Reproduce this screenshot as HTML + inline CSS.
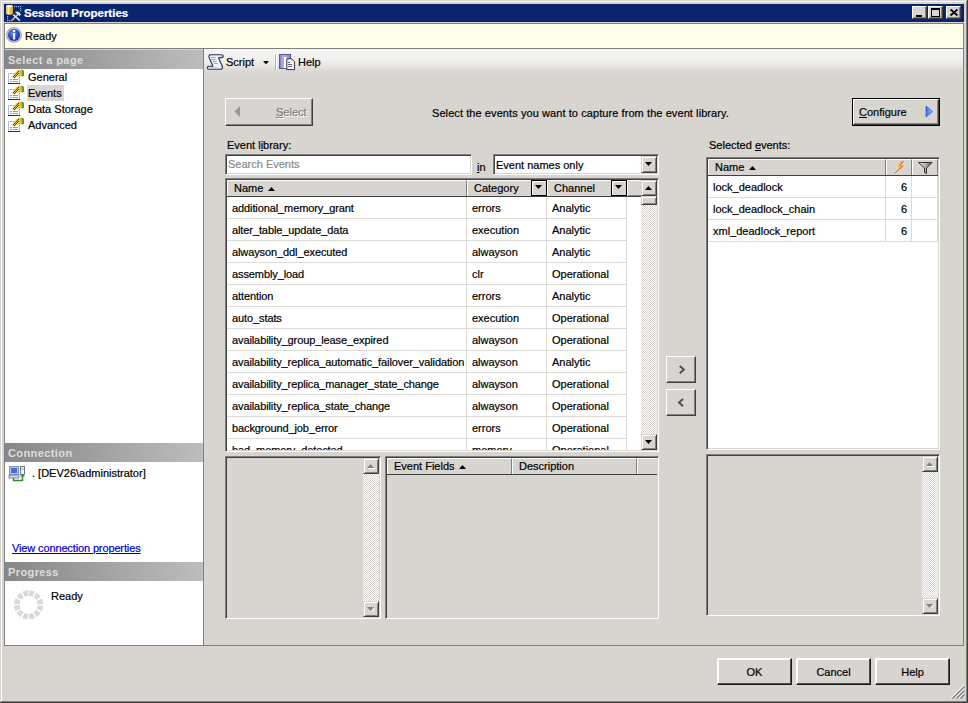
<!DOCTYPE html><html><head><meta charset="utf-8"><style>
*{box-sizing:border-box;margin:0;padding:0}
html,body{width:968px;height:703px;overflow:hidden}
body{position:relative;background:#D8D5D0;font-family:"Liberation Sans",sans-serif;font-size:11px;color:#000}
.a{position:absolute}
.t{position:absolute;line-height:13px;white-space:nowrap;-webkit-text-stroke:0.2px currentColor}
.sunken{position:absolute;border:1px solid;border-color:#808080 #fff #fff #808080;box-shadow:inset 1px 1px #404040,inset -1px -1px #D8D5D0}
.hdr{position:absolute;background:linear-gradient(to right,#878787,#bdbdbd);color:#dedede;font-weight:bold;font-size:11px;line-height:13px;letter-spacing:0.4px}
.btn{position:absolute;border:1px solid;border-color:#fff #404040 #404040 #fff;box-shadow:inset -1px -1px #808080;background:#D8D5D0}
.sb{position:absolute;border:1px solid;border-color:#D8D5D0 #404040 #404040 #D8D5D0;box-shadow:inset 1px 1px #fff,inset -1px -1px #808080;background:#D8D5D0}
.db{position:absolute;border:2px solid;border-color:#fff #1a1a1a #1a1a1a #fff;background:#D8D5D0}
.db:after{content:'';position:absolute;right:-1px;bottom:-1px;left:-1px;top:-1px;border-right:1px solid #505050;border-bottom:1px solid #505050}
.hc{position:absolute;height:16px;border-top:1px solid #fff;border-left:1px solid #fff;border-right:1px solid #808080;background:#D8D5D0}
.check{background-color:#fff;background-image:linear-gradient(45deg,#D8D5D0 25%,transparent 25%,transparent 75%,#D8D5D0 75%),linear-gradient(45deg,#D8D5D0 25%,transparent 25%,transparent 75%,#D8D5D0 75%);background-size:2px 2px;background-position:0 0,1px 1px}
.gl{position:absolute;background:#DCDAD5}
svg{position:absolute;overflow:visible}
</style></head><body>
<div class="a" style="left:1px;top:1px;width:1px;height:700px;background:#fff"></div>
<div class="a" style="left:1px;top:1px;width:965px;height:1px;background:#fff"></div>
<div class="a" style="left:966px;top:1px;width:1px;height:701px;background:#808080"></div>
<div class="a" style="left:1px;top:701px;width:966px;height:1px;background:#808080"></div>
<div class="a" style="left:967px;top:0;width:1px;height:703px;background:#404040"></div>
<div class="a" style="left:0;top:702px;width:968px;height:1px;background:#404040"></div>
<div class="a" style="left:4px;top:4px;width:960px;height:18px;background:#0A2570"></div>
<svg style="left:0;top:0" width="24" height="24" viewBox="0 0 24 24">
<defs><linearGradient id="cyl" x1="0" x2="1"><stop offset="0" stop-color="#f0b860"/><stop offset="0.35" stop-color="#fde9a0"/><stop offset="0.75" stop-color="#e8b830"/><stop offset="1" stop-color="#c89020"/></linearGradient></defs>
<path d="M6 6.5 Q6 5 9.5 5 Q13 5 13 6.5 V13.3 Q13 14.8 9.5 14.8 Q6 14.8 6 13.3 Z" fill="url(#cyl)"/>
<ellipse cx="9.5" cy="6.2" rx="3.2" ry="1.1" fill="#fff4c8"/>
<g fill="#9dbde6"><rect x="14" y="6" width="1.2" height="1.2"/><rect x="16" y="6" width="1.2" height="1.2"/><rect x="18" y="6" width="1.2" height="1.2"/><rect x="20" y="6" width="1.2" height="1.2"/><rect x="20" y="8" width="1.2" height="1.2"/><rect x="20" y="10" width="1.2" height="1.2"/>
<rect x="7" y="16" width="1.2" height="1.2"/><rect x="7" y="18" width="1.2" height="1.2"/><rect x="7" y="20" width="1.2" height="1.2"/><rect x="9" y="20" width="1.2" height="1.2"/><rect x="11" y="20" width="1.2" height="1.2"/></g>
<line x1="12" y1="20.3" x2="18" y2="14.3" stroke="#d8c888" stroke-width="1.5"/>
<line x1="13.3" y1="14.6" x2="19.8" y2="20.6" stroke="#d8e0f8" stroke-width="1.7"/>
<path d="M15 12 Q17 10.8 19.5 12.5 L21 14.5 L19.5 16 L17.5 14.5 Z" fill="#e8f0ff"/>
</svg>
<div class="t" style="left:24px;top:7px;color:#fff;font-weight:bold;font-size:11.5px">Session Properties</div>
<div class="a" style="left:912px;top:6px;width:15px;height:13px;background:#D8D5D0;border-top:1px solid #fff;border-left:1px solid #fff;border-right:1px solid #404040;border-bottom:1px solid #404040;box-shadow:inset -1px -1px #808080"></div>
<div class="a" style="left:928px;top:6px;width:15px;height:13px;background:#D8D5D0;border-top:1px solid #fff;border-left:1px solid #fff;border-right:1px solid #404040;border-bottom:1px solid #404040;box-shadow:inset -1px -1px #808080"></div>
<div class="a" style="left:946px;top:6px;width:15px;height:13px;background:#D8D5D0;border-top:1px solid #fff;border-left:1px solid #fff;border-right:1px solid #404040;border-bottom:1px solid #404040;box-shadow:inset -1px -1px #808080"></div>
<div class="a" style="left:916px;top:15px;width:6px;height:2px;background:#000"></div>
<div class="a" style="left:931px;top:8px;width:9px;height:9px;border:1px solid #000;border-top-width:2px"></div>
<svg style="left:946px;top:6px" width="16" height="14" viewBox="0 0 16 14"><path d="M4.5 3.5 L11.5 9.5 M11.5 3.5 L4.5 9.5" stroke="#000" stroke-width="1.7"/></svg>
<div class="a" style="left:4px;top:23px;width:960px;height:26px;background:#FFFEEA;border:1px solid #808080"></div>
<svg style="left:0;top:20px" width="28" height="28" viewBox="0 20 28 28">
<defs><radialGradient id="ib" cx="0.4" cy="0.35" r="0.75"><stop offset="0" stop-color="#6a88f0"/><stop offset="0.6" stop-color="#2a44c0"/><stop offset="1" stop-color="#1a2890"/></radialGradient></defs>
<circle cx="14" cy="35" r="7.8" fill="#8c94a4"/>
<circle cx="14" cy="35" r="7" fill="#c4c4f0"/>
<circle cx="14" cy="35" r="6.1" fill="url(#ib)"/>
<rect x="13" y="30" width="2.2" height="2" fill="#fff"/>
<rect x="13" y="33" width="2.2" height="6.5" fill="#eef2ff"/>
</svg>
<div class="t" style="left:25px;top:30px">Ready</div>
<div class="a" style="left:4px;top:49px;width:200px;height:597px;background:#fff;border-left:1px solid #808080;border-right:1px solid #808080;border-bottom:1px solid #808080"></div>
<div class="a" style="left:5px;top:49px;width:198px;height:1px;background:#D8D5D0"></div>
<div class="hdr" style="left:5px;top:50px;width:198px;height:19px;padding:4px 0 0 3px">Select a page</div>
<div class="a" style="left:27px;top:85px;width:37px;height:16px;background:#D8D6D2"></div>
<svg style="left:0;top:0" width="1" height="1"><defs><linearGradient id="pg" x1="0" x2="1"><stop offset="0" stop-color="#e4d8a0"/><stop offset="0.5" stop-color="#f2d050"/><stop offset="1" stop-color="#d0a020"/></linearGradient></defs></svg>
<svg style="left:8px;top:68px" width="16" height="16" viewBox="0 0 16 16">
<rect x="0.5" y="5.5" width="11" height="10" fill="#fff" stroke="#b4bcd8"/>
<rect x="0" y="15" width="12" height="1" fill="#2a3040"/>
<rect x="2" y="11" width="2" height="1" fill="#8898c0"/><rect x="5" y="11" width="5" height="1" fill="#8898c0"/>
<rect x="2" y="13" width="2" height="1" fill="#8898c0"/><rect x="5" y="13" width="5" height="1" fill="#8898c0"/>
<path d="M3.8 9.6 Q6 4.5 8.8 2.6 Q10.5 1.8 13.5 1.8 Q15.6 1.8 15.9 3.5 L15.9 7.8 Q15 8.8 13.8 8.4 Q11 8 8.5 9 L6.3 10.8 Z" fill="url(#pg)"/>
<path d="M13.6 1.8 Q15.6 1.8 15.9 3.5 L15.9 7.8 Q15.2 8.6 14.2 8.4 Q14.6 5 13.6 1.8 Z" fill="#4c9438"/>
<g fill="#4a4020"><rect x="5" y="8" width="1" height="1"/><rect x="6" y="7" width="1" height="1"/><rect x="7" y="6" width="1" height="1"/><rect x="8" y="5" width="1" height="1"/><rect x="9" y="4" width="1" height="1"/>
<rect x="6" y="9" width="1" height="1"/><rect x="7" y="8" width="1" height="1"/><rect x="8" y="7" width="1" height="1"/><rect x="9" y="6" width="1" height="1"/><rect x="10" y="5" width="1" height="1"/><rect x="10" y="3" width="1" height="1"/></g>
</svg>
<div class="t" style="left:28px;top:71px">General</div>
<svg style="left:8px;top:84px" width="16" height="16" viewBox="0 0 16 16">
<rect x="0.5" y="5.5" width="11" height="10" fill="#fff" stroke="#b4bcd8"/>
<rect x="0" y="15" width="12" height="1" fill="#2a3040"/>
<rect x="2" y="11" width="2" height="1" fill="#8898c0"/><rect x="5" y="11" width="5" height="1" fill="#8898c0"/>
<rect x="2" y="13" width="2" height="1" fill="#8898c0"/><rect x="5" y="13" width="5" height="1" fill="#8898c0"/>
<path d="M3.8 9.6 Q6 4.5 8.8 2.6 Q10.5 1.8 13.5 1.8 Q15.6 1.8 15.9 3.5 L15.9 7.8 Q15 8.8 13.8 8.4 Q11 8 8.5 9 L6.3 10.8 Z" fill="url(#pg)"/>
<path d="M13.6 1.8 Q15.6 1.8 15.9 3.5 L15.9 7.8 Q15.2 8.6 14.2 8.4 Q14.6 5 13.6 1.8 Z" fill="#4c9438"/>
<g fill="#4a4020"><rect x="5" y="8" width="1" height="1"/><rect x="6" y="7" width="1" height="1"/><rect x="7" y="6" width="1" height="1"/><rect x="8" y="5" width="1" height="1"/><rect x="9" y="4" width="1" height="1"/>
<rect x="6" y="9" width="1" height="1"/><rect x="7" y="8" width="1" height="1"/><rect x="8" y="7" width="1" height="1"/><rect x="9" y="6" width="1" height="1"/><rect x="10" y="5" width="1" height="1"/><rect x="10" y="3" width="1" height="1"/></g>
</svg>
<div class="t" style="left:28px;top:87px">Events</div>
<svg style="left:8px;top:100px" width="16" height="16" viewBox="0 0 16 16">
<rect x="0.5" y="5.5" width="11" height="10" fill="#fff" stroke="#b4bcd8"/>
<rect x="0" y="15" width="12" height="1" fill="#2a3040"/>
<rect x="2" y="11" width="2" height="1" fill="#8898c0"/><rect x="5" y="11" width="5" height="1" fill="#8898c0"/>
<rect x="2" y="13" width="2" height="1" fill="#8898c0"/><rect x="5" y="13" width="5" height="1" fill="#8898c0"/>
<path d="M3.8 9.6 Q6 4.5 8.8 2.6 Q10.5 1.8 13.5 1.8 Q15.6 1.8 15.9 3.5 L15.9 7.8 Q15 8.8 13.8 8.4 Q11 8 8.5 9 L6.3 10.8 Z" fill="url(#pg)"/>
<path d="M13.6 1.8 Q15.6 1.8 15.9 3.5 L15.9 7.8 Q15.2 8.6 14.2 8.4 Q14.6 5 13.6 1.8 Z" fill="#4c9438"/>
<g fill="#4a4020"><rect x="5" y="8" width="1" height="1"/><rect x="6" y="7" width="1" height="1"/><rect x="7" y="6" width="1" height="1"/><rect x="8" y="5" width="1" height="1"/><rect x="9" y="4" width="1" height="1"/>
<rect x="6" y="9" width="1" height="1"/><rect x="7" y="8" width="1" height="1"/><rect x="8" y="7" width="1" height="1"/><rect x="9" y="6" width="1" height="1"/><rect x="10" y="5" width="1" height="1"/><rect x="10" y="3" width="1" height="1"/></g>
</svg>
<div class="t" style="left:28px;top:103px">Data Storage</div>
<svg style="left:8px;top:116px" width="16" height="16" viewBox="0 0 16 16">
<rect x="0.5" y="5.5" width="11" height="10" fill="#fff" stroke="#b4bcd8"/>
<rect x="0" y="15" width="12" height="1" fill="#2a3040"/>
<rect x="2" y="11" width="2" height="1" fill="#8898c0"/><rect x="5" y="11" width="5" height="1" fill="#8898c0"/>
<rect x="2" y="13" width="2" height="1" fill="#8898c0"/><rect x="5" y="13" width="5" height="1" fill="#8898c0"/>
<path d="M3.8 9.6 Q6 4.5 8.8 2.6 Q10.5 1.8 13.5 1.8 Q15.6 1.8 15.9 3.5 L15.9 7.8 Q15 8.8 13.8 8.4 Q11 8 8.5 9 L6.3 10.8 Z" fill="url(#pg)"/>
<path d="M13.6 1.8 Q15.6 1.8 15.9 3.5 L15.9 7.8 Q15.2 8.6 14.2 8.4 Q14.6 5 13.6 1.8 Z" fill="#4c9438"/>
<g fill="#4a4020"><rect x="5" y="8" width="1" height="1"/><rect x="6" y="7" width="1" height="1"/><rect x="7" y="6" width="1" height="1"/><rect x="8" y="5" width="1" height="1"/><rect x="9" y="4" width="1" height="1"/>
<rect x="6" y="9" width="1" height="1"/><rect x="7" y="8" width="1" height="1"/><rect x="8" y="7" width="1" height="1"/><rect x="9" y="6" width="1" height="1"/><rect x="10" y="5" width="1" height="1"/><rect x="10" y="3" width="1" height="1"/></g>
</svg>
<div class="t" style="left:28px;top:119px">Advanced</div>
<div class="hdr" style="left:5px;top:443px;width:198px;height:19px;padding:4px 0 0 3px">Connection</div>
<svg style="left:9px;top:466px" width="17" height="16" viewBox="0 0 17 16">
<rect x="0.5" y="0.5" width="9" height="8" fill="#c0c8e0" stroke="#8890b0"/>
<rect x="2" y="2" width="6" height="5" fill="#3a70e0"/>
<rect x="0" y="9" width="10" height="3" fill="#d0d8e8" stroke="#6870a0" stroke-width="0.8"/>
<rect x="11.5" y="0.5" width="4" height="8" fill="#f0f0f8" stroke="#707888"/>
<rect x="12" y="2.5" width="3" height="1" fill="#a0a8b8"/>
<path d="M4.5 12 V14.5 H13.5 V9.5" fill="none" stroke="#2e8b2e" stroke-width="1.4"/>
<path d="M11 10.5 L13.5 8 L16 10.5 Z" fill="#2e8b2e"/>
</svg>
<div class="t" style="left:32px;top:467px">. [DEV26\administrator]</div>
<div class="t" style="left:12px;top:542px;color:#0000CC;text-decoration:underline;letter-spacing:-0.13px">View connection properties</div>
<div class="hdr" style="left:5px;top:562px;width:198px;height:19px;padding:4px 0 0 3px">Progress</div>
<svg style="left:14px;top:590px" width="30" height="30" viewBox="0 0 30 30"><circle cx="14.6" cy="14.9" r="11.8" fill="none" stroke="#d8d8d8" stroke-width="5.6" stroke-dasharray="4.6 1.58" transform="rotate(-87 14.6 14.9)"/></svg>
<div class="t" style="left:51px;top:590px">Ready</div>
<div class="a" style="left:204px;top:645px;width:760px;height:1px;background:#808080"></div>
<div class="a" style="left:963px;top:49px;width:1px;height:597px;background:#808080"></div>
<div class="a" style="left:204px;top:49px;width:759px;height:28px;background:linear-gradient(to bottom,#f7f6f4 0px,#f2f0ee 11px,#e9e7e3 16px,#dcd9d4 22px,#D8D5D0 27px)"></div>
<svg style="left:207px;top:54px" width="17" height="17" viewBox="0 0 17 17">
<path d="M3 0.8 H14 Q16.2 0.8 16.2 2.3 Q16.2 3.8 14 3.8 H11.5 L15 11.5 Q16.3 14.2 14.2 15.3 H2 Q0.3 15.3 0.3 13.8 Q0.3 12.2 2 12.2 H6 L2.2 4 Q1.5 1.5 3 0.8 Z" fill="#eef2ff" stroke="#283048" stroke-width="1.1" stroke-linejoin="round"/>
<path d="M1.2 13.8 H10.5" stroke="#c0d0f4" stroke-width="1.6"/>
<path d="M12 2.3 H15" stroke="#c0d0f4" stroke-width="1.2"/>
<path d="M4 3.5 H8.5 M4.2 5.5 H8.5 M5.5 7.5 H9.5 M7 9.5 H10.5" stroke="#8494c4" stroke-width="0.9"/>
</svg>
<div class="t" style="left:226px;top:56px">Script</div>
<svg style="left:263px;top:61px" width="6" height="4" viewBox="0 0 6 4"><path d="M0 0 H6 L3 3.2 Z" fill="#000"/></svg>
<div class="a" style="left:275px;top:55px;width:1px;height:15px;background:#b8b4ac"></div>
<div class="a" style="left:276px;top:55px;width:1px;height:15px;background:#fff"></div>
<svg style="left:279px;top:54px" width="17" height="17" viewBox="0 0 17 17">
<defs><linearGradient id="bk" x1="0" x2="1"><stop offset="0" stop-color="#7a76b8"/><stop offset="0.3" stop-color="#b4b0f0"/><stop offset="1" stop-color="#8c88c8"/></linearGradient></defs>
<rect x="0.5" y="0.5" width="11" height="14" fill="url(#bk)" stroke="#5a5690" stroke-width="1"/>
<rect x="5" y="3" width="2.8" height="11" fill="#fff"/>
<path d="M7.8 4.8 H12.6 L15.6 7.8 V15.6 H7.8 Z" fill="#f6f6fc" stroke="#303050" stroke-width="1"/>
<path d="M9 8.5 H11 M9 10.5 H13 M9 12.5 H13" stroke="#606080" stroke-width="1"/>
</svg>
<div class="t" style="left:298px;top:56px">Help</div>
<div class="btn" style="left:225px;top:98px;width:88px;height:28px"></div>
<svg style="left:234px;top:106px" width="8" height="12" viewBox="0 0 8 12"><path d="M6 0 V11 L0.5 5.5 Z" fill="#9a9890"/></svg>
<div class="t" style="left:276px;top:106px;color:#808080;text-shadow:1px 1px #fff"><u>S</u>elect</div>
<div class="t" style="left:432px;top:107px;letter-spacing:0.08px">Select the events you want to capture from the event library.</div>
<div class="a" style="left:852px;top:98px;width:88px;height:28px;border:1px solid #000"></div>
<div class="btn" style="left:853px;top:99px;width:86px;height:26px"></div>
<div class="t" style="left:859px;top:106px"><u>C</u>onfigure</div>
<svg style="left:925px;top:105px" width="9" height="13" viewBox="0 0 9 13"><defs><linearGradient id="bt" x1="0" x2="1"><stop offset="0" stop-color="#3a6ae0"/><stop offset="1" stop-color="#9cc0ff"/></linearGradient></defs><path d="M1 1 L7.5 6.5 L1 12 Z" fill="url(#bt)" stroke="#2a5ad0" stroke-width="0.8"/></svg>
<div class="t" style="left:227px;top:139px">Event l<u>i</u>brary:</div>
<div class="sunken" style="left:225px;top:154px;width:247px;height:21px;background:#fff"></div>
<div class="t" style="left:228px;top:158px;color:#8a8a8a">Search Events</div>
<div class="t" style="left:477px;top:161px"><u>i</u>n</div>
<div class="sunken" style="left:493px;top:154px;width:166px;height:21px;background:#fff"></div>
<div class="t" style="left:496px;top:159px">Event names only</div>
<div class="sb" style="left:641px;top:156px;width:16px;height:17px"></div>
<svg style="left:645px;top:162px" width="7" height="4" viewBox="0 0 7 4"><path d="M0 0 H7 L3.5 4 Z" fill="#000"/></svg>
<div class="sunken" style="left:225px;top:178px;width:434px;height:274px;background:#fff"></div>
<div class="a" style="left:227px;top:180px;width:414px;height:270px;overflow:hidden">
<div class="gl" style="left:0;top:38px;width:400px;height:1px"></div>
<div class="t" style="left:5px;top:22px;width:234px;overflow:hidden;letter-spacing:-0.1px">additional_memory_grant</div>
<div class="t" style="left:245px;top:22px">errors</div>
<div class="t" style="left:325px;top:22px">Analytic</div>
<div class="gl" style="left:0;top:60px;width:400px;height:1px"></div>
<div class="t" style="left:5px;top:44px;width:234px;overflow:hidden;letter-spacing:-0.1px">alter_table_update_data</div>
<div class="t" style="left:245px;top:44px">execution</div>
<div class="t" style="left:325px;top:44px">Analytic</div>
<div class="gl" style="left:0;top:82px;width:400px;height:1px"></div>
<div class="t" style="left:5px;top:66px;width:234px;overflow:hidden;letter-spacing:-0.1px">alwayson_ddl_executed</div>
<div class="t" style="left:245px;top:66px">alwayson</div>
<div class="t" style="left:325px;top:66px">Analytic</div>
<div class="gl" style="left:0;top:104px;width:400px;height:1px"></div>
<div class="t" style="left:5px;top:88px;width:234px;overflow:hidden;letter-spacing:-0.1px">assembly_load</div>
<div class="t" style="left:245px;top:88px">clr</div>
<div class="t" style="left:325px;top:88px">Operational</div>
<div class="gl" style="left:0;top:126px;width:400px;height:1px"></div>
<div class="t" style="left:5px;top:110px;width:234px;overflow:hidden;letter-spacing:-0.1px">attention</div>
<div class="t" style="left:245px;top:110px">errors</div>
<div class="t" style="left:325px;top:110px">Analytic</div>
<div class="gl" style="left:0;top:148px;width:400px;height:1px"></div>
<div class="t" style="left:5px;top:132px;width:234px;overflow:hidden;letter-spacing:-0.1px">auto_stats</div>
<div class="t" style="left:245px;top:132px">execution</div>
<div class="t" style="left:325px;top:132px">Operational</div>
<div class="gl" style="left:0;top:170px;width:400px;height:1px"></div>
<div class="t" style="left:5px;top:154px;width:234px;overflow:hidden;letter-spacing:-0.1px">availability_group_lease_expired</div>
<div class="t" style="left:245px;top:154px">alwayson</div>
<div class="t" style="left:325px;top:154px">Operational</div>
<div class="gl" style="left:0;top:192px;width:400px;height:1px"></div>
<div class="t" style="left:5px;top:176px;width:234px;overflow:hidden;letter-spacing:-0.1px">availability_replica_automatic_failover_validation</div>
<div class="t" style="left:245px;top:176px">alwayson</div>
<div class="t" style="left:325px;top:176px">Analytic</div>
<div class="gl" style="left:0;top:214px;width:400px;height:1px"></div>
<div class="t" style="left:5px;top:198px;width:234px;overflow:hidden;letter-spacing:-0.1px">availability_replica_manager_state_change</div>
<div class="t" style="left:245px;top:198px">alwayson</div>
<div class="t" style="left:325px;top:198px">Operational</div>
<div class="gl" style="left:0;top:236px;width:400px;height:1px"></div>
<div class="t" style="left:5px;top:220px;width:234px;overflow:hidden;letter-spacing:-0.1px">availability_replica_state_change</div>
<div class="t" style="left:245px;top:220px">alwayson</div>
<div class="t" style="left:325px;top:220px">Operational</div>
<div class="gl" style="left:0;top:258px;width:400px;height:1px"></div>
<div class="t" style="left:5px;top:242px;width:234px;overflow:hidden;letter-spacing:-0.1px">background_job_error</div>
<div class="t" style="left:245px;top:242px">errors</div>
<div class="t" style="left:325px;top:242px">Operational</div>
<div class="t" style="left:5px;top:264px;width:234px;overflow:hidden;letter-spacing:-0.1px">bad_memory_detected</div>
<div class="t" style="left:245px;top:264px">memory</div>
<div class="t" style="left:325px;top:264px">Operational</div>
<div class="gl" style="left:239px;top:16px;width:1px;height:260px"></div>
<div class="gl" style="left:319px;top:16px;width:1px;height:260px"></div>
<div class="gl" style="left:399px;top:16px;width:1px;height:260px"></div>
<div class="a" style="left:0;top:0;width:414px;height:17px;background:#D8D5D0;border-bottom:1px solid #404040;box-shadow:inset 0 -1px #808080"></div>
<div class="hc" style="left:0;top:0;width:240px"></div>
<div class="hc" style="left:240px;top:0;width:80px;border-right:none"></div>
<div class="hc" style="left:320px;top:0;width:80px;border-right:none"></div>
<div class="a" style="left:400px;top:0;width:14px;height:16px;border-top:1px solid #fff;border-left:1px solid #fff"></div>
<div class="t" style="left:7px;top:2px">Name</div>
<svg style="left:41px;top:7px" width="7" height="4" viewBox="0 0 7 4"><path d="M0 4 H7 L3.5 0 Z" fill="#000"/></svg>
<div class="t" style="left:247px;top:2px">Category</div>
<div class="t" style="left:327px;top:2px">Channel</div>
<div class="a" style="left:304px;top:0;width:16px;height:16px;border:1px solid #000;background:#D8D5D0;box-shadow:inset 1px 1px #fff"></div>
<svg style="left:308px;top:5px" width="7" height="4" viewBox="0 0 7 4"><path d="M0 0 H7 L3.5 4 Z" fill="#000"/></svg>
<div class="a" style="left:384px;top:0;width:16px;height:16px;border:1px solid #000;background:#D8D5D0;box-shadow:inset 1px 1px #fff"></div>
<svg style="left:388px;top:5px" width="7" height="4" viewBox="0 0 7 4"><path d="M0 0 H7 L3.5 4 Z" fill="#000"/></svg>
</div>
<div class="a check" style="left:641px;top:180px;width:16px;height:270px"></div>
<div class="sb" style="left:641px;top:180px;width:16px;height:16px"></div>
<svg style="left:645px;top:186px" width="7" height="4" viewBox="0 0 7 4"><path d="M0 4 H7 L3.5 0 Z" fill="#000"/></svg>
<div class="sb" style="left:641px;top:196px;width:16px;height:9px"></div>
<div class="sb" style="left:641px;top:434px;width:16px;height:16px"></div>
<svg style="left:645px;top:440px" width="7" height="4" viewBox="0 0 7 4"><path d="M0 0 H7 L3.5 4 Z" fill="#000"/></svg>
<div class="t" style="left:709px;top:139px">Selected <u>e</u>vents:</div>
<div class="sunken" style="left:706px;top:157px;width:234px;height:293px;background:#fff"></div>
<div class="a" style="left:708px;top:159px;width:230px;height:289px;overflow:hidden">
<div class="gl" style="left:0;top:38px;width:230px;height:1px"></div>
<div class="t" style="left:5px;top:22px">lock_deadlock</div>
<div class="t" style="left:193px;top:22px">6</div>
<div class="gl" style="left:0;top:60px;width:230px;height:1px"></div>
<div class="t" style="left:5px;top:44px">lock_deadlock_chain</div>
<div class="t" style="left:193px;top:44px">6</div>
<div class="gl" style="left:0;top:82px;width:230px;height:1px"></div>
<div class="t" style="left:5px;top:66px">xml_deadlock_report</div>
<div class="t" style="left:193px;top:66px">6</div>
<div class="gl" style="left:177px;top:16px;width:1px;height:67px"></div>
<div class="gl" style="left:203px;top:16px;width:1px;height:67px"></div>
<div class="gl" style="left:229px;top:16px;width:1px;height:67px"></div>
<div class="a" style="left:0;top:0;width:230px;height:17px;background:#D8D5D0;border-bottom:1px solid #404040;box-shadow:inset 0 -1px #808080"></div>
<div class="hc" style="left:0;top:0;width:178px"></div>
<div class="hc" style="left:178px;top:0;width:26px"></div>
<div class="hc" style="left:204px;top:0;width:26px"></div>
<div class="t" style="left:7px;top:2px">Name</div>
<svg style="left:41px;top:7px" width="7" height="4" viewBox="0 0 7 4"><path d="M0 4 H7 L3.5 0 Z" fill="#000"/></svg>
<svg style="left:186px;top:2px" width="11" height="13" viewBox="0 0 11 13">
<defs><linearGradient id="lt" x1="0" x2="1" y1="0" y2="0"><stop offset="0" stop-color="#fff0a0"/><stop offset="0.5" stop-color="#f8c040"/><stop offset="1" stop-color="#f07850"/></linearGradient></defs>
<path d="M7.5 0.3 L1.2 6.3 L4.8 6.3 L0.6 12.3 L9.3 4.6 L5.6 4.6 L9.8 0.3 Z" fill="url(#lt)"/>
<path d="M9.8 0.3 L5.6 4.6 M9.3 4.6 L0.6 12.3" stroke="#d84838" stroke-width="0.9"/>
</svg>
<svg style="left:210px;top:3px" width="15" height="12" viewBox="0 0 15 12">
<defs><linearGradient id="fn" x1="0" x2="1"><stop offset="0" stop-color="#ffffff"/><stop offset="1" stop-color="#606060"/></linearGradient></defs>
<path d="M0.5 0.5 H14 L8.5 6 V11.5 L6.5 10.5 V6 Z" fill="url(#fn)" stroke="#202020" stroke-width="0.9"/>
</svg>
</div>
<div class="btn" style="left:666px;top:356px;width:30px;height:27px"></div>
<svg style="left:678px;top:365px" width="8" height="10" viewBox="0 0 8 10"><path d="M1.8 1 L5.8 4.6 L1.8 8.2" fill="none" stroke="#505050" stroke-width="2"/></svg>
<div class="btn" style="left:666px;top:389px;width:30px;height:27px"></div>
<svg style="left:677px;top:398px" width="7" height="10" viewBox="0 0 7 10"><path d="M6 1 L2 4.6 L6 8.2" fill="none" stroke="#505050" stroke-width="2"/></svg>
<div class="sunken" style="left:225px;top:456px;width:156px;height:163px;background:#D8D5D0"></div>
<div class="a check" style="left:363px;top:458px;width:16px;height:159px"></div>
<div class="sb" style="left:363px;top:458px;width:16px;height:16px"></div>
<svg style="left:367px;top:464px" width="9" height="6" viewBox="0 0 9 6"><path d="M1 4.5 H8.2" stroke="#fff" stroke-width="1"/><path d="M0 4 H7 L3.5 0.3 Z" fill="#808080"/></svg>
<div class="sb" style="left:363px;top:601px;width:16px;height:16px"></div>
<svg style="left:367px;top:607px" width="9" height="6" viewBox="0 0 9 6"><path d="M4.5 4.5 L8 1" stroke="#fff" stroke-width="1"/><path d="M0 0 H7 L3.5 3.7 Z" fill="#808080"/></svg>
<div class="sunken" style="left:385px;top:456px;width:274px;height:163px;background:#D8D5D0"></div>
<div class="a" style="left:387px;top:458px;width:270px;height:17px;background:#D8D5D0;border-bottom:1px solid #404040;box-shadow:inset 0 -1px #808080"></div>
<div class="hc" style="left:387px;top:458px;width:125px"></div>
<div class="hc" style="left:512px;top:458px;width:125px"></div>
<div class="hc" style="left:637px;top:458px;width:20px;border-right:none"></div>
<div class="t" style="left:394px;top:460px">Event Fields</div>
<svg style="left:459px;top:465px" width="7" height="4" viewBox="0 0 7 4"><path d="M0 4 H7 L3.5 0 Z" fill="#000"/></svg>
<div class="t" style="left:519px;top:460px">Description</div>
<div class="sunken" style="left:706px;top:454px;width:234px;height:162px;background:#D8D5D0"></div>
<div class="a check" style="left:922px;top:456px;width:16px;height:158px"></div>
<div class="sb" style="left:922px;top:456px;width:16px;height:16px"></div>
<svg style="left:926px;top:462px" width="9" height="6" viewBox="0 0 9 6"><path d="M1 4.5 H8.2" stroke="#fff" stroke-width="1"/><path d="M0 4 H7 L3.5 0.3 Z" fill="#808080"/></svg>
<div class="sb" style="left:922px;top:598px;width:16px;height:16px"></div>
<svg style="left:926px;top:604px" width="9" height="6" viewBox="0 0 9 6"><path d="M4.5 4.5 L8 1" stroke="#fff" stroke-width="1"/><path d="M0 0 H7 L3.5 3.7 Z" fill="#808080"/></svg>
<div class="db" style="left:717px;top:658px;width:75px;height:27px"></div>
<div class="t" style="left:717px;top:666px;width:75px;text-align:center">OK</div>
<div class="db" style="left:796px;top:658px;width:75px;height:27px"></div>
<div class="t" style="left:796px;top:666px;width:75px;text-align:center">Cancel</div>
<div class="db" style="left:875px;top:658px;width:75px;height:27px"></div>
<div class="t" style="left:875px;top:666px;width:75px;text-align:center">Help</div>
<svg style="left:950px;top:684px" width="15" height="15" viewBox="0 0 15 15">
<path d="M14 1 L1 14 M14 5 L5 14 M14 9 L9 14" stroke="#fff" stroke-width="1"/>
<path d="M14.5 2.5 L2.5 14.5 M14.5 6.5 L6.5 14.5 M14.5 10.5 L10.5 14.5" stroke="#808080" stroke-width="1.4"/>
</svg>
</body></html>
